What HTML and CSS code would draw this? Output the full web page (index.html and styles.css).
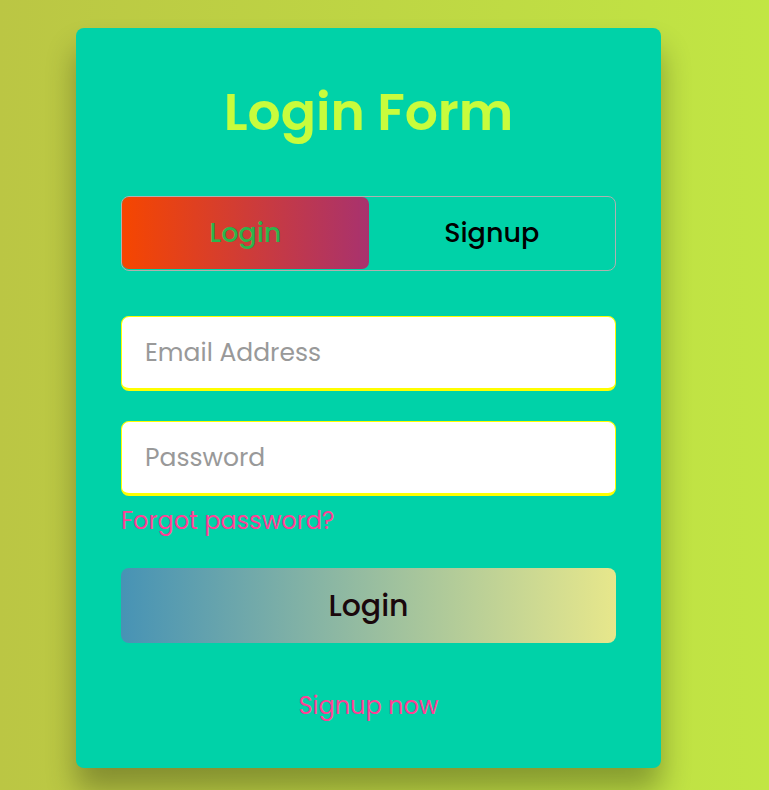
FILE: index.html
```html
<!DOCTYPE html>
<html lang="en">
<head>
<meta charset="utf-8">
<meta name="viewport" content="width=device-width, initial-scale=1">
<title>Login Form</title>
<link rel="stylesheet" href="styles.css">
</head>
<body>
<main class="card">
  <h1 class="title">Login Form</h1>
  <form class="form">
    <div class="tabs">
      <input class="tab-input" type="radio" name="mode" id="mode-login" checked>
      <label class="tab" for="mode-login">Login</label>
      <input class="tab-input" type="radio" name="mode" id="mode-signup">
      <label class="tab" for="mode-signup">Signup</label>
    </div>
    <input class="field" type="email" placeholder="Email Address" aria-label="Email Address">
    <input class="field field-next" type="password" placeholder="Password" aria-label="Password">
    <a class="link forgot" href="#">Forgot password?</a>
    <button class="submit" type="submit">Login</button>
    <a class="link signup" href="#">Signup now</a>
  </form>
</main>
</body>
</html>
```
FILE: styles.css
```css
* {
  box-sizing: border-box;
}

body {
  margin: 0;
  min-height: 100vh;
  padding: 28px 108px 22px 76px;
  font-family: Poppins, Inter, sans-serif;
  background: linear-gradient(to right, #bbc644, #c1e644);
}

.card {
  padding: 45px;
  border-radius: 8px;
  background: #00d2a8;
  box-shadow: 0 22px 30px rgba(0, 0, 0, 0.3);
}

.title {
  margin: 0 0 45px;
  font-size: 52px;
  line-height: 78px;
  font-weight: 600;
  text-align: center;
  color: #c8fc3c;
}

.form {
  display: flex;
  flex-direction: column;
}

.tabs {
  position: relative;
  display: flex;
  align-items: flex-start;
  height: 75px;
  margin-bottom: 45px;
  border: 1px solid #b0b0b0;
  border-radius: 8px;
}

.tab-input {
  position: absolute;
  opacity: 0;
}

.tab {
  flex: 1;
  border-radius: 7px;
  font-size: 27px;
  line-height: 72px;
  font-weight: 500;
  text-align: center;
  color: #000;
  cursor: pointer;
}

.tab-input:checked + .tab {
  color: #2cb54c;
  background: linear-gradient(to right, #f64600, #a8326e);
}

.field {
  width: 100%;
  height: 75px;
  padding: 0 23px;
  border: 1px solid #ff0;
  border-bottom-width: 3px;
  border-radius: 8px;
  outline: none;
  font: inherit;
  font-size: 25px;
  background: #fff;
}

.field-next {
  margin-top: 30px;
}

.field::placeholder {
  color: #999;
  opacity: 1;
}

.link {
  font-size: 24px;
  line-height: 35px;
  color: #ff4095;
  text-decoration: none;
}

.forgot {
  align-self: flex-start;
  margin: 7px 0 30px;
}

.submit {
  height: 75px;
  padding: 0;
  border: 0;
  border-radius: 8px;
  font: inherit;
  font-size: 30px;
  font-weight: 500;
  color: #1a080c;
  background: linear-gradient(to right, #4793b5, #e7e78b);
  cursor: pointer;
}

.signup {
  align-self: center;
  margin-top: 45px;
}
```
